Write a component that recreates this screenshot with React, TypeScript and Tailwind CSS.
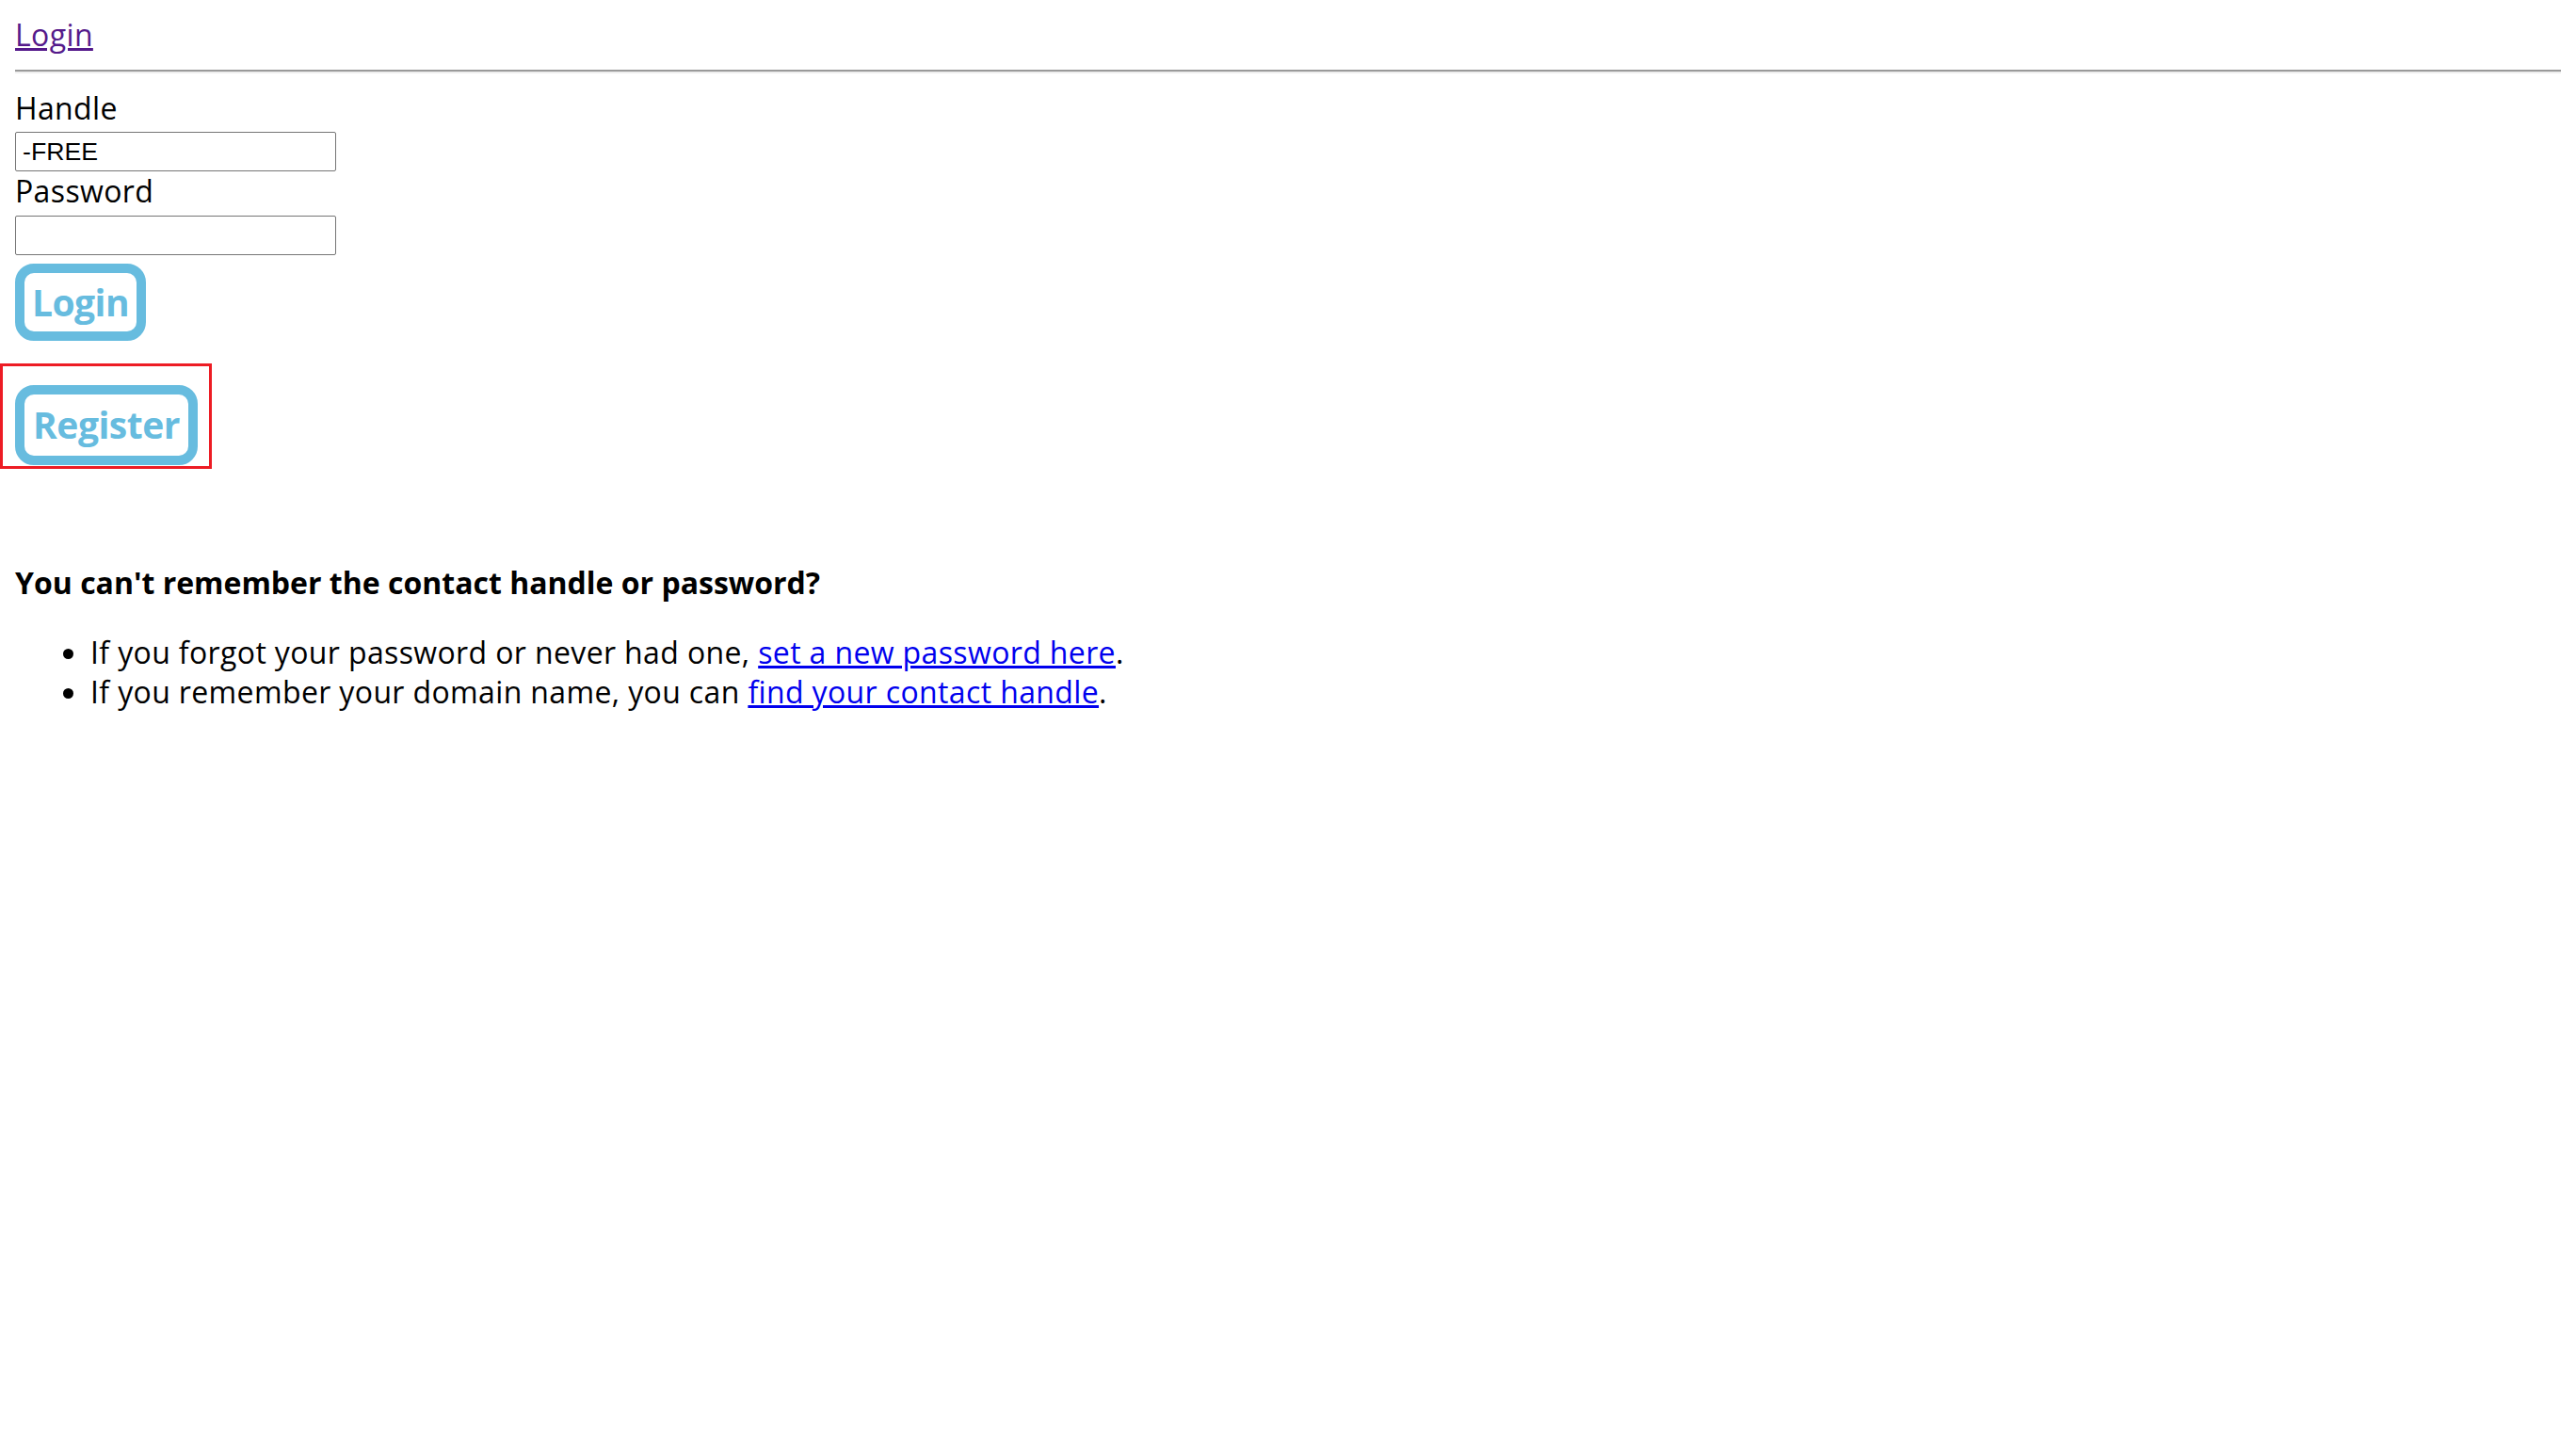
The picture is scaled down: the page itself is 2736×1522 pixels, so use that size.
import React from 'react';

const sans = "font-['Open_Sans',_'Noto_Sans',_sans-serif]";

export default function App() {
  return (
    <div className={`min-h-screen bg-white text-black ${sans} text-[32px] leading-[42px] tracking-[0.37px]`}>
      <div className="px-4 pt-4">
        {/* Breadcrumb */}
        <div>
          <a href="#" className="text-[#551a8b] underline">
            Login
          </a>
        </div>
        <hr className="my-4 border-t-2 border-b-2 border-t-[#9a9a9a] border-b-[#eeeeee]" />

        {/* Form */}
        <form onSubmit={(e) => e.preventDefault()}>
          <label className="block">Handle</label>
          <input
            type="text"
            defaultValue="-FREE"
            className="mt-[4px] block h-[42px] w-[341px] rounded-[2px] border border-[#767676] px-[7px] font-['Liberation_Sans',_Arial,_sans-serif] text-[26.67px] leading-[40px] tracking-normal outline-none"
          />
          <label className="block">Password</label>
          <input
            type="password"
            className="mt-[5px] block h-[42px] w-[341px] rounded-[2px] border border-[#767676] px-[7px] font-['Liberation_Sans',_Arial,_sans-serif] text-[26.67px] leading-[40px] tracking-normal outline-none"
          />
          <button
            type="submit"
            className="mt-[9px] flex h-[82px] w-[139px] items-center justify-center rounded-[20px] border-[10px] border-[#67bcdf] bg-white pb-[2px] text-[39px] font-bold leading-none tracking-[-0.5px] text-[#67bcdf]"
          >
            Login
          </button>
        </form>

        {/* Register, highlighted */}
        <div className="-ml-4 mt-[24px] w-[225px] border-[3px] border-[#ed1c24] pt-[20px] pb-[1px] pl-[13px]">
          <button
            type="button"
            className="flex h-[85px] w-[194px] items-center justify-center rounded-[20px] border-[10px] border-[#67bcdf] bg-white pb-[2px] text-[39px] font-bold leading-none tracking-[-0.5px] text-[#67bcdf]"
          >
            Register
          </button>
        </div>

        {/* Help */}
        <h3 className="mt-[98px] text-[32px] font-bold leading-[46px] tracking-normal">
          You can't remember the contact handle or password?
        </h3>
        <ul className="mt-[30px] list-disc pl-[80px]">
          <li>
            If you forgot your password or never had one,{' '}
            <a href="#" className="text-[#0000ee] underline">
              set a new password here
            </a>
            .
          </li>
          <li>
            If you remember your domain name, you can{' '}
            <a href="#" className="text-[#0000ee] underline">
              find your contact handle
            </a>
            .
          </li>
        </ul>
      </div>
    </div>
  );
}
